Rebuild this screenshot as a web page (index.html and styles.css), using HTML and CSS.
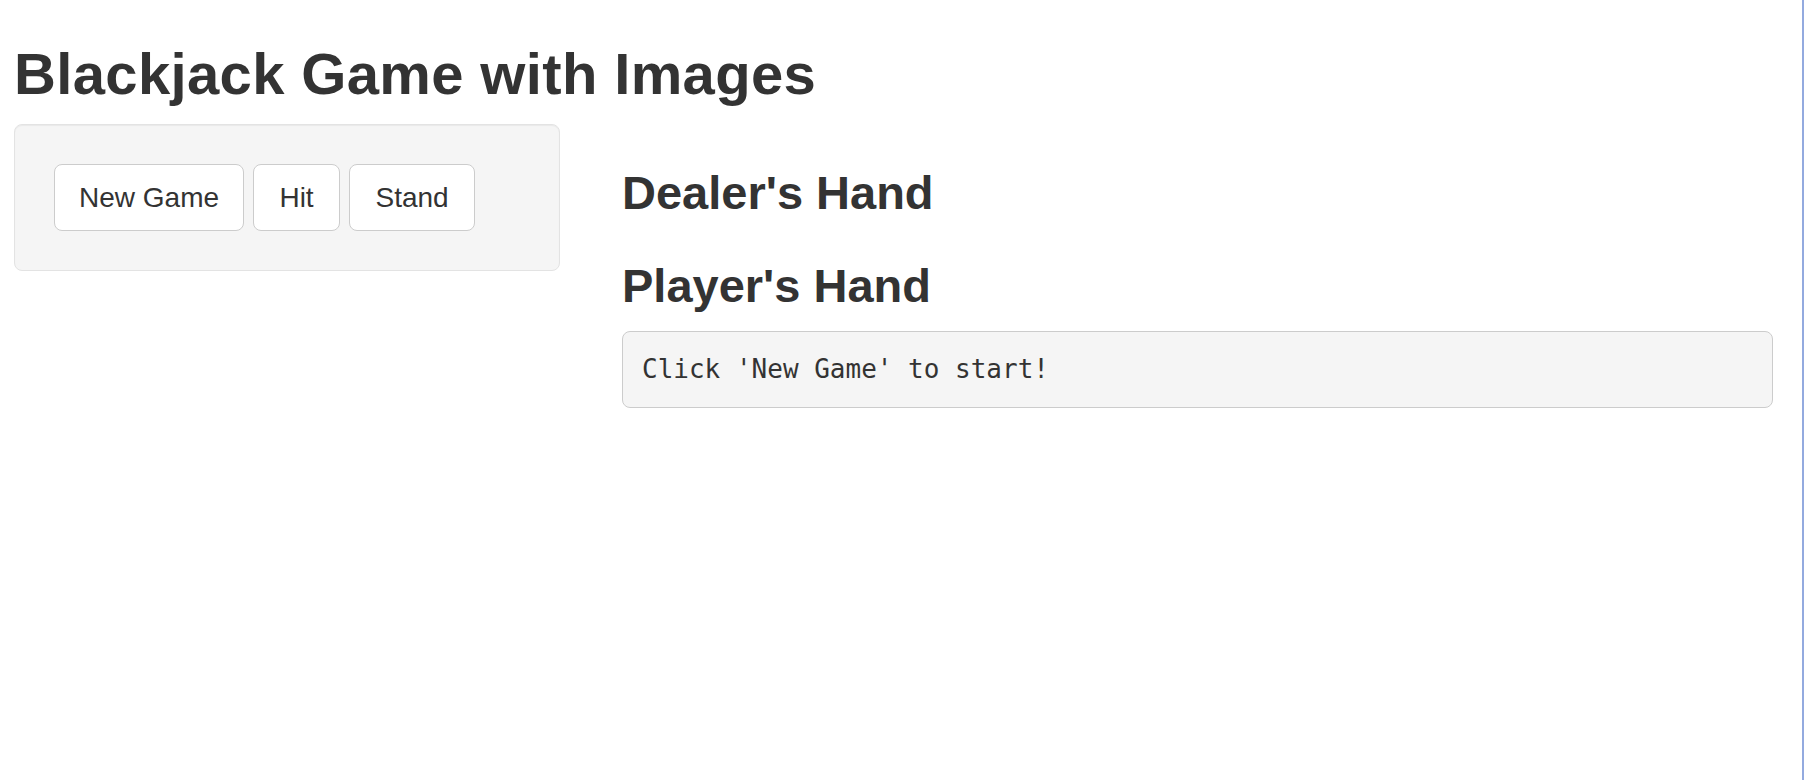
FILE: index.html
```html
<!DOCTYPE html>
<html lang="en">
<head>
<meta charset="utf-8">
<title>Blackjack Game with Images</title>
<link rel="stylesheet" href="styles.css">
</head>
<body>
<div class="page">
  <h2 class="title">Blackjack Game with Images</h2>
  <div class="layout">
    <div class="sidebar">
      <div class="well">
        <button class="btn" type="button">New Game</button>
        <button class="btn btn-hit" type="button">Hit</button>
        <button class="btn btn-stand" type="button">Stand</button>
      </div>
    </div>
    <div class="main">
      <h3 class="hand-title dealer">Dealer's Hand</h3>
      <div class="hand"></div>
      <h3 class="hand-title player">Player's Hand</h3>
      <div class="hand"></div>
      <pre class="status">Click 'New Game' to start!</pre>
    </div>
  </div>
</div>
</body>
</html>
```
FILE: styles.css
```css
html, body {
  margin: 0;
  padding: 0;
  background: #ffffff;
}

body {
  font-family: "Liberation Sans", Arial, Helvetica, sans-serif;
  color: #333333;
}

.page {
  box-sizing: border-box;
  min-height: 100vh;
  padding: 42px 29px 0 14px;
  border-right: 2px solid #93aadf;
}

.title {
  margin: 0 0 18px 0;
  font-size: 58px;
  line-height: 64px;
  font-weight: 700;
  color: #333333;
  letter-spacing: 0.35px;
}

.layout {
  display: flex;
  align-items: flex-start;
  gap: 62px;
}

.sidebar {
  width: 546px;
  flex: 0 0 546px;
}

.well {
  box-sizing: border-box;
  display: flex;
  gap: 9px;
  padding: 39px;
  background: #f5f5f5;
  border: 1px solid #e3e3e3;
  border-radius: 8px;
  box-shadow: inset 0 1px 1px rgba(0, 0, 0, 0.05);
}

.btn {
  box-sizing: border-box;
  height: 67px;
  padding: 12px 24px;
  margin: 0;
  font-family: "Liberation Sans", Arial, Helvetica, sans-serif;
  font-size: 28px;
  line-height: 41px;
  color: #333333;
  background: #ffffff;
  border: 1px solid #cccccc;
  border-radius: 8px;
  cursor: pointer;
}

.btn-hit {
  width: 87px;
  padding: 12px 0;
}

.btn-stand {
  width: 126px;
  padding: 12px 0;
}

.main {
  width: 1151px;
  flex: 0 0 1151px;
  display: flex;
  flex-direction: column;
}

.hand-title {
  margin: 0;
  font-size: 47px;
  line-height: 52px;
  font-weight: 700;
  color: #333333;
}

.dealer {
  margin-top: 43px;
}

.player {
  margin-top: 41px;
}

.hand {
  height: 0;
}

.status {
  box-sizing: border-box;
  margin: 19px 0 0 0;
  padding: 19px;
  font-family: "DejaVu Sans Mono", "Liberation Mono", monospace;
  font-size: 26px;
  line-height: 37px;
  color: #333333;
  background: #f5f5f5;
  border: 1px solid #cccccc;
  border-radius: 8px;
  white-space: pre-wrap;
}
```
